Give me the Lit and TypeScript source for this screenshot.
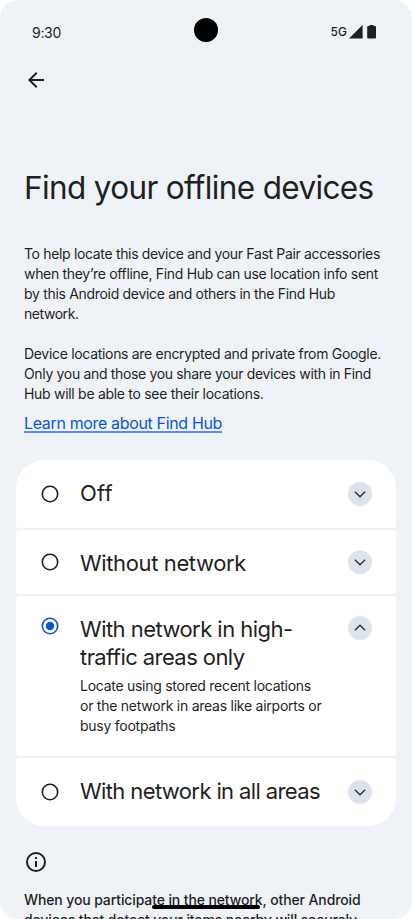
import { LitElement, html, svg, css } from "lit";
import { customElement, property, state } from "lit/decorators.js";

/** One line of text, tracked so that it spans the given measure. */
@customElement("text-line")
class TextLine extends LitElement {
  @property({ type: Number }) measure = 0;
  @property() text = "";
  @state() private tracking = 0;

  static styles = css`
    :host { display: block; white-space: nowrap; }
    .run { display: inline-block; }
  `;

  firstUpdated() {
    const run = this.renderRoot.querySelector(".run") as HTMLElement;
    const natural = run.getBoundingClientRect().width;
    this.tracking = (this.measure - natural) / this.text.length;
  }

  render() {
    return html`<span class="run" style="letter-spacing:${this.tracking}px">${this.text}</span>`;
  }
}

type Line = [string, number];

interface Option {
  id: string;
  title: Line[];
  detail: Line[];
}

const intro: Line[][] = [
  [
    ["To help locate this device and your Fast Pair accessories", 356],
    ["when they’re offline, Find Hub can use location info sent", 354],
    ["by this Android device and others in the Find Hub", 311],
    ["network.", 54.5],
  ],
  [
    ["Device locations are encrypted and private from Google.", 357],
    ["Only you and those you share your devices with in Find", 347],
    ["Hub will be able to see their locations.", 239.5],
  ],
];

const options: Option[] = [
  { id: "off", title: [["Off", 33]], detail: [] },
  { id: "without", title: [["Without network", 166]], detail: [] },
  {
    id: "high",
    title: [["With network in high-", 212.5], ["traffic areas only", 164.5]],
    detail: [
      ["Locate using stored recent locations", 231],
      ["or the network in areas like airports or", 241.5],
      ["busy footpaths", 95.5],
    ],
  },
  { id: "all", title: [["With network in all areas", 240]], detail: [] },
];

const lines = (items: Line[]) =>
  items.map(([text, width]) => html`<text-line .text=${text} .measure=${width}></text-line>`);

@customElement("app-root")
class AppRoot extends LitElement {
  @state() private selected = "high";

  static styles = css`
    :host {
      display: block;
      height: 919px;
      overflow: hidden;
      background: #fff;
      font-family: Inter, Roboto, sans-serif;
      color: #1f1f1f;
    }
    .screen {
      position: relative;
      box-sizing: border-box;
      width: 412px;
      height: 919px;
      overflow: hidden;
      border-radius: 18px;
      background: #eff3f8;
    }
    svg { display: block; }
    .status {
      box-sizing: border-box;
      height: 52px;
      padding: 18px 35px 0 32px;
      display: grid;
      grid-template-columns: 162px 24px 1fr;
    }
    .clock { font-size: 14px; line-height: 30px; }
    .camera { width: 24px; height: 24px; border-radius: 50%; background: #000; }
    .signals { display: flex; justify-content: flex-end; height: 28px; align-items: center; }
    .net { font-size: 12px; line-height: 28px; margin-right: 2px; font-weight: 500; }
    .bar { padding: 16px 24px 0; }
    .title {
      margin: 76px 24px 0;
      font-size: 31.5px;
      line-height: 40px;
      font-weight: 400;
    }
    .intro { margin: 36px 24px 0; font-size: 14px; line-height: 20px; }
    .para { margin: 0 0 20px; }
    .para:last-child { margin: 0; }
    .link {
      display: block;
      width: 198px;
      height: 20px;
      margin: 9px 24px 0;
      font-size: 16px;
      line-height: 20px;
      color: #0b57d0;
      border-bottom: 2px solid #5b8def;
      box-sizing: border-box;
      text-decoration: none;
    }
    .list { margin: 27px 16px 0; display: grid; gap: 2px; }
    .card {
      background: #fff;
      border-radius: 4px;
      display: grid;
      grid-template-columns: 20px 1fr 24px;
      padding: 0 24px;
      align-items: start;
    }
    .card:first-child { border-radius: 28px 28px 4px 4px; }
    .card:last-child { border-radius: 4px 4px 28px 28px; }
    .off, .all { height: 68px; }
    .without { height: 64px; }
    .high { height: 160px; }
    .radio { margin: 24px 0 0; }
    .without .radio { margin-top: 22px; }
    .high .radio { margin-top: 20px; }
    .copy { padding: 19px 0 0 20px; }
    .name { font-size: 22px; line-height: 28px; }
    .detail { font-size: 14px; line-height: 20px; margin-top: 5px; }
    .chevron {
      width: 24px; height: 24px; margin-top: 22px;
      border-radius: 50%; background: #dde3ea;
    }
    .without .chevron, .high .chevron { margin-top: 20px; }
    .info { margin: 24px 24px 0; }
    .note { margin: 16px 24px 0; font-size: 14px; line-height: 20px; font-weight: 500; }
    .handle {
      position: absolute;
      left: 152px;
      top: 905px;
      width: 108px;
      height: 4px;
      border-radius: 2px;
      background: #000;
    }
  `;

  private radio(on: boolean) {
    const color = on ? "#0b57d0" : "#1f1f1f";
    return html`<svg class="radio" width="20" height="20" viewBox="0 0 20 20">
      <circle cx="10" cy="10" r="7.7" fill="none" stroke=${color} stroke-width="1.6"></circle>
      ${on ? svg`<circle cx="10" cy="10" r="4.2" fill=${color}></circle>` : ""}
    </svg>`;
  }

  private card(o: Option) {
    const on = o.id === this.selected;
    return html`<div class="card ${o.id}" @click=${() => (this.selected = o.id)}>
      ${this.radio(on)}
      <div class="copy">
        <div class="name">${lines(o.title)}</div>
        ${o.detail.length ? html`<div class="detail">${lines(o.detail)}</div>` : ""}
      </div>
      <div class="chevron">
        <svg width="24" height="24" viewBox="0 0 24 24" fill="none" stroke="#303030" stroke-width="1.4">
          <path d=${o.detail.length ? "M6.9 14.3 12 9.3l5.1 5" : "M6.9 9.7l5.1 5 5.1-5"}></path>
        </svg>
      </div>
    </div>`;
  }

  render() {
    return html`<div class="screen">
      <div class="status">
        <div class="clock">${lines([["9:30", 29]])}</div>
        <div class="camera"></div>
        <div class="signals">
          <div class="net">${lines([["5G", 16.5]])}</div>
          <svg width="28" height="14" viewBox="0 0 28 14" fill="#1f1f1f">
            <path d="M0 13.6 13.6 0v13.6z"></path>
            <path d="M20.6 0h4v1H26q1 0 1 1v10.6q0 1-1 1h-6.800q-1 0-1-1V2q0-1 1-1h1.400z"></path>
          </svg>
        </div>
      </div>
      <div class="bar">
        <svg width="24" height="24" viewBox="0 0 24 24" fill="none" stroke="#1f1f1f" stroke-width="2">
          <path d="M20 12H5.500M12.700 4.700 5.400 12l7.300 7.300"></path>
        </svg>
      </div>
      <div class="title">${lines([["Find your offline devices", 349.5]])}</div>
      <div class="intro">${intro.map((p) => html`<div class="para">${lines(p)}</div>`)}</div>
      <a class="link">${lines([["Learn more about Find Hub", 198]])}</a>
      <div class="list">${options.map((o) => this.card(o))}</div>
      <svg class="info" width="24" height="24" viewBox="0 0 24 24" fill="none" stroke="#1f1f1f" stroke-width="2">
        <circle cx="12" cy="12" r="9"></circle>
        <path d="M12 11v6M12 7v2"></path>
      </svg>
      <div class="note">
        ${lines([
          ["When you participate in the network, other Android", 336.5],
          ["devices that detect your items nearby will securely", 333],
        ])}
      </div>
      <div class="handle"></div>
    </div>`;
  }
}
